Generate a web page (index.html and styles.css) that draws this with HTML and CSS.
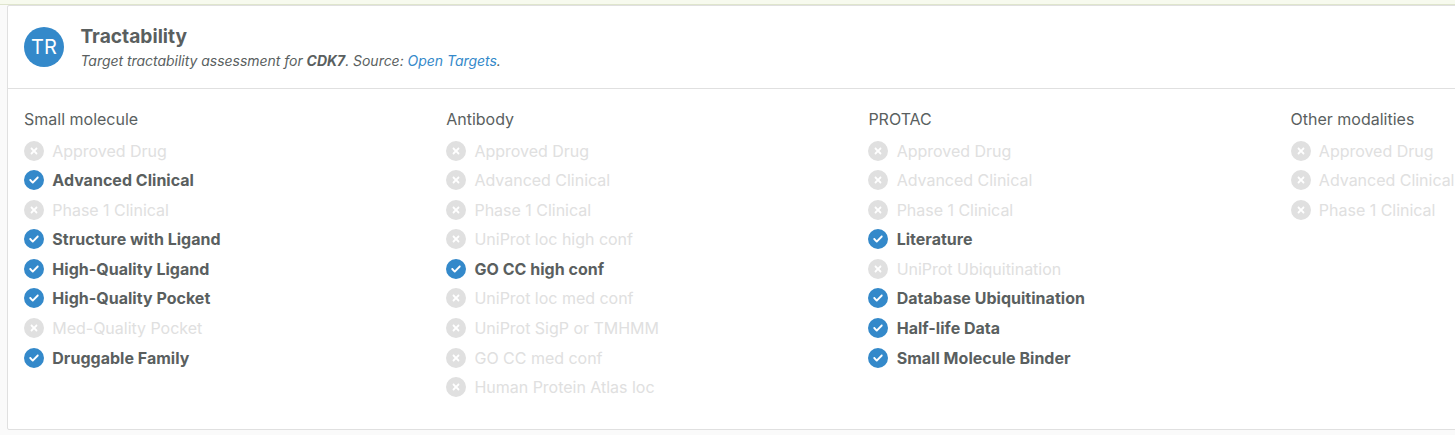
FILE: index.html
```html
<!DOCTYPE html>
<html lang="en">
<head>
    <meta charset="UTF-8">
    <meta name="viewport" content="width=device-width, initial-scale=1.0">
    <title>Tractability</title>
    <link rel="stylesheet" href="styles.css">
</head>
<body>

<!-- shared icons -->
<svg class="icon-defs" xmlns="http://www.w3.org/2000/svg">
    <symbol id="check" viewBox="0 0 512 512">
        <path d="M256 512A256 256 0 1 0 256 0a256 256 0 1 0 0 512zM369 209L241 337c-9.4 9.4-24.6 9.4-33.9 0l-64-64c-9.4-9.4-9.4-24.6 0-33.9s24.6-9.4 33.9 0l47 47L335 175c9.4-9.4 24.6-9.4 33.9 0s9.4 24.6 0 33.9z"/>
    </symbol>
    <symbol id="times" viewBox="0 0 512 512">
        <path d="M256 512A256 256 0 1 0 256 0a256 256 0 1 0 0 512zM175 175c9.4-9.4 24.6-9.4 33.9 0l47 47 47-47c9.4-9.4 24.6-9.4 33.9 0s9.4 24.6 0 33.9l-47 47 47 47c9.4 9.4 9.4 24.6 0 33.9s-24.6 9.4-33.9 0l-47-47-47 47c-9.4 9.4-24.6 9.4-33.9 0s-9.4-24.6 0-33.9l47-47-47-47c-9.4-9.4-9.4-24.6 0-33.9z"/>
    </symbol>
</svg>

<div class="top-strip"></div>

<section class="card">
    <header class="card-header">
        <div class="avatar">TR</div>
        <div>
            <h2 class="title">Tractability</h2>
            <p class="description">Target tractability assessment for <strong>CDK7</strong>. Source: <a href="#">Open Targets</a>.</p>
        </div>
    </header>

    <div class="modalities">
        <div class="modality">
            <h3 class="modality-name">Small molecule</h3>
            <ul class="list">
                <li class="item"><svg class="icon"><use href="#times"/></svg>Approved Drug</li>
                <li class="item active"><svg class="icon"><use href="#check"/></svg>Advanced Clinical</li>
                <li class="item"><svg class="icon"><use href="#times"/></svg>Phase 1 Clinical</li>
                <li class="item active"><svg class="icon"><use href="#check"/></svg>Structure with Ligand</li>
                <li class="item active"><svg class="icon"><use href="#check"/></svg>High-Quality Ligand</li>
                <li class="item active"><svg class="icon"><use href="#check"/></svg>High-Quality Pocket</li>
                <li class="item"><svg class="icon"><use href="#times"/></svg>Med-Quality Pocket</li>
                <li class="item active"><svg class="icon"><use href="#check"/></svg>Druggable Family</li>
            </ul>
        </div>

        <div class="modality">
            <h3 class="modality-name">Antibody</h3>
            <ul class="list">
                <li class="item"><svg class="icon"><use href="#times"/></svg>Approved Drug</li>
                <li class="item"><svg class="icon"><use href="#times"/></svg>Advanced Clinical</li>
                <li class="item"><svg class="icon"><use href="#times"/></svg>Phase 1 Clinical</li>
                <li class="item"><svg class="icon"><use href="#times"/></svg>UniProt loc high conf</li>
                <li class="item active"><svg class="icon"><use href="#check"/></svg>GO CC high conf</li>
                <li class="item"><svg class="icon"><use href="#times"/></svg>UniProt loc med conf</li>
                <li class="item"><svg class="icon"><use href="#times"/></svg>UniProt SigP or TMHMM</li>
                <li class="item"><svg class="icon"><use href="#times"/></svg>GO CC med conf</li>
                <li class="item"><svg class="icon"><use href="#times"/></svg>Human Protein Atlas loc</li>
            </ul>
        </div>

        <div class="modality">
            <h3 class="modality-name">PROTAC</h3>
            <ul class="list">
                <li class="item"><svg class="icon"><use href="#times"/></svg>Approved Drug</li>
                <li class="item"><svg class="icon"><use href="#times"/></svg>Advanced Clinical</li>
                <li class="item"><svg class="icon"><use href="#times"/></svg>Phase 1 Clinical</li>
                <li class="item active"><svg class="icon"><use href="#check"/></svg>Literature</li>
                <li class="item"><svg class="icon"><use href="#times"/></svg>UniProt Ubiquitination</li>
                <li class="item active"><svg class="icon"><use href="#check"/></svg>Database Ubiquitination</li>
                <li class="item active"><svg class="icon"><use href="#check"/></svg>Half-life Data</li>
                <li class="item active"><svg class="icon"><use href="#check"/></svg>Small Molecule Binder</li>
            </ul>
        </div>

        <div class="modality">
            <h3 class="modality-name">Other modalities</h3>
            <ul class="list">
                <li class="item"><svg class="icon"><use href="#times"/></svg>Approved Drug</li>
                <li class="item"><svg class="icon"><use href="#times"/></svg>Advanced Clinical</li>
                <li class="item"><svg class="icon"><use href="#times"/></svg>Phase 1 Clinical</li>
            </ul>
        </div>
    </div>
</section>

</body>
</html>
```
FILE: styles.css
```css
* {
    box-sizing: border-box;
}

body {
    margin: 0;
    height: 435px;
    overflow: hidden;
    background-color: #fafafa;
    color: #5a5f5f;
    font-family: Inter, sans-serif;
    font-size: 16px;
}

.icon-defs {
    display: none;
}

.top-strip {
    height: 5px;
    background-color: #f7faee;
    border-bottom: 1px solid #dfe5cd;
}

.card {
    width: 1722px;
    height: 425px;
    margin-left: 7px;
    background-color: #fff;
    border: 1px solid #e0e0e0;
    border-radius: 2px;
}

.card-header {
    display: flex;
    align-items: center;
    gap: 16.4px;
    height: 83px;
    padding: 0 16px;
    border-bottom: 1px solid #e0e0e0;
}

.avatar {
    display: flex;
    align-items: center;
    justify-content: center;
    width: 40px;
    height: 40px;
    border-radius: 50%;
    background-color: #3489ca;
    color: #fff;
    font-size: 20px;
}

.title {
    margin: 0;
    font-size: 19.2px;
    font-weight: 700;
    line-height: 27px;
}

.description {
    margin: 0;
    font-size: 14px;
    font-style: italic;
    line-height: 22px;
    letter-spacing: -0.03px;
}

.description a {
    color: #3489ca;
    text-decoration: none;
}

.modalities {
    display: grid;
    grid-template-columns: repeat(4, 422.2px);
    padding: 18px 16px;
}

.modality-name {
    margin: 0 0 7.26px;
    font-size: 16px;
    font-weight: 400;
    line-height: 24px;
}

.list {
    margin: 0;
    padding: 0;
    list-style: none;
}

.item {
    display: flex;
    align-items: center;
    height: 29.58px;
    padding-bottom: 5px;
    color: #e0e0e0;
    line-height: 20px;
    letter-spacing: -0.02px;
    white-space: nowrap;
}

.item.active {
    color: #5a5f5f;
    font-weight: 700;
    letter-spacing: 0.02px;
}

.icon {
    width: 20px;
    height: 20px;
    margin-right: 8.3px;
    fill: #e0e0e0;
}

.active .icon {
    fill: #3489ca;
}
```
